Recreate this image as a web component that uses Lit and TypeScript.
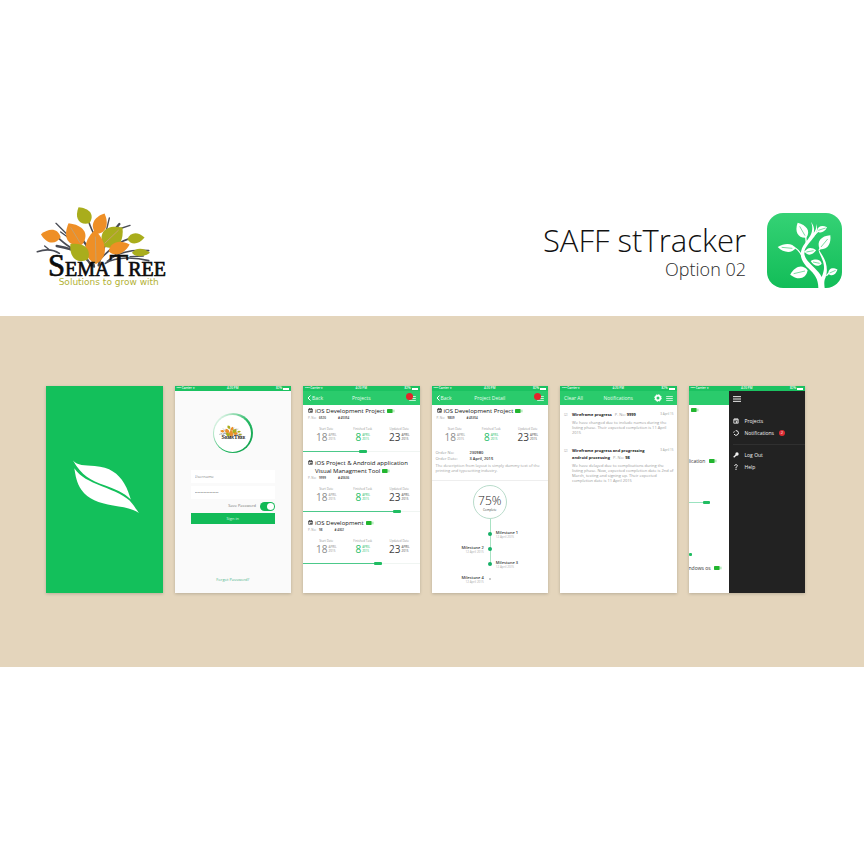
import { LitElement, html, svg, css, nothing } from "lit";
import { customElement } from "lit/decorators.js";

interface Project {
  title: string;
  poNumber: string;
  code: string;
  progress: number;
}

interface Notice {
  title: string;
  poNumber: string;
  date: string;
  body: string;
}

const PROJECTS: Project[] = [
  { title: "iOS Development Project", poNumber: "6520", code: "# 45354", progress: 52 },
  { title: "iOS Project & Android application Visual Managment Tool", poNumber: "9999", code: "# 45636", progress: 81 },
  { title: "iOS Development", poNumber: "98", code: "# 4302", progress: 65 },
];

const STATS = [
  { label: "Start Date", day: "18", month: "APRIL", year: "2015", tone: "muted" },
  { label: "Finished Task", day: "8", month: "APRIL", year: "2015", tone: "green" },
  { label: "Updated Date", day: "23", month: "APRIL", year: "2015", tone: "dark" },
];

const NOTICES: Notice[] = [
  {
    title: "Wireframe progress",
    poNumber: "9999",
    date: "3 April 15",
    body: "We have changed due to include names during the listing phase. Their expected completion is 11 April 2015",
  },
  {
    title: "Wireframe progress and progressing android processing",
    poNumber: "98",
    date: "3 April 15",
    body: "We have delayed due to complications during the listing phase. Now, expected completion date is 2nd of March, testing and signing up. Their expected completion date is 11 April 2015",
  },
];

const leaf = (x: number, y: number, length: number, width: number, angle: number, fill: string) => svg`
  <path transform="translate(${x} ${y}) rotate(${angle})" fill=${fill}
    d="M0 0C${length * 0.2} ${-width * 0.7} ${length * 0.65} ${-width * 0.7} ${length} 0C${length * 0.65} ${width * 0.6} ${length * 0.2} ${width * 0.7} 0 0Z"></path>`;

const OLIVE = "#a9ad1c";
const ORANGE = "#ee8f26";

const treeLogo = (tagline: boolean) => html`
  <svg class="tree-logo" viewBox="0 0 450 285" role="img" aria-label="SemaTree">
    <g fill="none" stroke="#4a4c55" stroke-linecap="round">
      <path stroke-width="7" d="M184 196C166 165 128 145 80 138M206 196C214 150 232 112 268 72M192 200C186 160 170 130 146 108"></path>
      <path stroke-width="5" d="M88 160C70 148 48 146 22 155M232 184C255 162 300 146 356 152M226 190C260 168 320 172 356 182M126 146C110 134 92 124 84 112M206 130C190 100 180 80 176 64M208 180C240 146 270 124 298 116"></path>
      <path stroke-width="4" d="M108 100L78 70M122 118L92 96M56 148L44 138M255 165L280 148M228 96L238 54M258 90L300 76M300 170L340 168"></path>
    </g>
    ${leaf(178, 70, 58, 42, -124, OLIVE)}
    ${leaf(92, 112, 60, 38, -171, ORANGE)}
    ${leaf(156, 134, 76, 56, -122, ORANGE)}
    ${leaf(199, 102, 66, 40, -68, ORANGE)}
    ${leaf(220, 138, 80, 60, -44, OLIVE)}
    ${leaf(198, 192, 102, 58, -92, ORANGE)}
    ${leaf(174, 178, 70, 48, -139, OLIVE)}
    ${leaf(236, 154, 66, 36, -18, ORANGE)}
    ${leaf(292, 118, 52, 30, -6, OLIVE)}
    ${leaf(306, 158, 54, 22, 0, OLIVE)}
    <path d="M198 186L196 110M150 128L122 82M224 130L266 90" fill="none" stroke="#c9a06a" stroke-width="3"></path>
    <g class="wordmark" fill="#0c0c0c">
      <text x="54" y="228"><tspan class="cap">S</tspan>EMA<tspan class="cap">T</tspan>REE</text>
    </g>
    ${tagline ? svg`<text class="tagline" x="86" y="254" fill="#b3b235">Solutions to grow with</text>` : nothing}
  </svg>`;

const appIcon = html`
  <svg class="app-icon" viewBox="0 0 225 225" role="img" aria-label="stTracker">
    <defs>
      <linearGradient id="tile" x1="0" y1="0" x2="0" y2="1">
        <stop offset="0" stop-color="#35d275"></stop>
        <stop offset="1" stop-color="#12bd58"></stop>
      </linearGradient>
    </defs>
    <rect width="225" height="225" rx="48" fill="url(#tile)"></rect>
    <path fill="#fff" d="M154 225C154 198 143 184 124 166C104 146 96 128 105 106C113 88 132 72 135 54C137 42 135 34 132 26C141 38 143 50 140 60C148 50 149 40 147 32C155 48 148 64 138 76C126 92 113 104 112 118C111 136 126 148 142 164C152 174 160 182 164 192C172 174 174 160 166 140C162 130 156 120 154 108C165 124 172 136 176 148C182 168 180 184 173 200C171 208 172 216 173 225Z"></path>
    <path fill="none" stroke="#fff" stroke-width="4" d="M108 134C100 118 94 108 80 102M142 66L156 52M118 90L116 70M157 112L160 104M112 118L120 112M178 188L186 180"></path>
    <g>
      ${leaf(118, 74, 52, 32, -120, "#fff")}
      ${leaf(150, 54, 32, 18, -20, "#fff")}
      ${leaf(86, 106, 54, 24, -176, "#fff")}
      ${leaf(158, 108, 52, 30, -52, "#fff")}
      ${leaf(114, 118, 34, 20, -10, "#fff")}
      ${leaf(164, 152, 34, 18, -166, "#fff")}
      ${leaf(122, 172, 54, 34, 166, "#fff")}
      ${leaf(184, 182, 30, 20, -24, "#fff")}
    </g>
    <g fill="none" stroke="#35c871" stroke-width="2">
      <path d="M114 68L98 40M154 52L176 45M76 106L44 103M162 102L182 78M118 117L140 113M158 151L138 147M114 174L80 182M188 180L206 172"></path>
    </g>
  </svg>`;

const battery = html`<svg class="battery" viewBox="0 0 24 12" aria-hidden="true">
  <rect width="17" height="12" rx="2" fill="#22b52f"></rect>
  <rect x="18" y="2" width="5" height="8" fill="#b8ecc0"></rect>
</svg>`;

const calendar = html`<svg class="glyph" viewBox="0 0 15 15" aria-hidden="true">
  <path fill="none" stroke="currentColor" stroke-width="2" d="M2 3H13V13H2ZM2 5H13M5 0V4M10 0V4"></path>
  <path fill="currentColor" d="M7 8H11V12H7Z"></path>
</svg>`;

const menuGlyph = html`<svg class="glyph" viewBox="0 0 24 18" aria-hidden="true">
  <path stroke="currentColor" stroke-width="3" d="M0 2H24M0 9H24M0 16H24"></path>
</svg>`;

@customElement("app-root")
export class AppRoot extends LitElement {
  static styles = css`
    :host {
      display: block;
      min-height: 100vh;
      background: #fff;
      color: #333;
      font: 4px/6px "Open Sans", "Noto Sans", sans-serif;
    }
    * { box-sizing: border-box; }
    h1, h2, h3, p, ul { margin: 0; padding: 0; font-weight: inherit; font-size: inherit; }
    ul { list-style: none; }
    svg { display: block; flex: none; overflow: visible; }
    button { border: 0; padding: 0; margin: 0; background: none; color: inherit; font: inherit; }
    a { color: inherit; text-decoration: none; }

    .header {
      display: flex;
      align-items: center;
      justify-content: space-between;
      padding: 200px 22px 21px 30px;
    }
    .brand .tree-logo { width: 150px; height: 95px; }
    .wordmark { font: 60px "Liberation Serif", serif; stroke: #0c0c0c; stroke-width: 2px; }
    .cap { font-size: 92px; }
    .tagline { font: 27px "DejaVu Sans", sans-serif; }
    .product { display: flex; align-items: center; gap: 21px; padding-top: 6px; }
    .app-icon { width: 75px; height: 75px; }
    .product-text { padding-top: 3px; text-align: right; color: #2b2b2b; }
    .product-text h1 { font-size: 31px; line-height: 34px; font-weight: 300; color: #111; }
    .product-text p { font-size: 18px; line-height: 24px; font-weight: 300; }

    .stage {
      display: grid;
      grid-template-columns: repeat(6, 1fr);
      gap: 12px;
      padding: 70px 59px 74px 46px;
      background: #e4d5bc;
    }
    .phone {
      display: flex;
      flex-direction: column;
      min-width: 0;
      min-height: 207px;
      overflow: hidden;
      background: #fff;
      box-shadow: 0 1px 3px #00000030;
    }
    .splash { align-items: center; justify-content: center; background: #13c05b; }
    .splash svg { width: 66px; height: 54px; margin: 0 0 6px 4px; }

    .status {
      display: grid;
      grid-template-columns: 1fr auto 1fr;
      align-items: center;
      height: 5px;
      padding: 0 2px;
      background: #1bc261;
      color: #fff;
      font-size: 3px;
      line-height: 5px;
      font-weight: 600;
    }
    .status .right { display: flex; justify-content: flex-end; align-items: center; gap: 1px; }
    .cell { width: 6px; height: 2px; background: #fff; }
    .nav {
      display: grid;
      grid-template-columns: 1fr auto 1fr;
      align-items: center;
      height: 14px;
      padding: 0 4px;
      background: #2acb6c;
      color: #e6fbee;
      font-size: 5px;
      line-height: 8px;
    }
    .nav .back { display: flex; align-items: center; gap: 1px; }
    .nav .back svg { width: 4px; height: 6px; }
    .nav .tools { display: flex; justify-content: flex-end; align-items: center; gap: 4px; }
    .nav .glyph { width: 7px; height: 5px; }
    .nav .gear { width: 8px; height: 8px; }
    .alert { position: relative; }
    .alert::before {
      content: "";
      position: absolute;
      right: 3px;
      bottom: 1px;
      width: 7px;
      height: 7px;
      border-radius: 50%;
      background: #e3242b;
    }

    .login { background: #fafafa; }
    .login form { display: flex; flex-direction: column; flex: 1; padding: 22px 16px 9px; }
    .medallion {
      display: grid;
      place-items: center;
      align-self: center;
      width: 40px;
      height: 40px;
      border-radius: 50%;
      background: linear-gradient(310deg, #0b9c48, #27b965 45%, #d9f2e3 85%);
    }
    .medallion span {
      display: grid;
      place-items: center;
      width: 37px;
      height: 37px;
      border-radius: 50%;
      background: #fff;
    }
    .medallion .tree-logo { width: 30px; height: 19px; }
    .field {
      width: 100%;
      min-width: 0;
      height: 13px;
      margin-top: 3px;
      padding: 0 4px;
      border: 0;
      outline: 0;
      background: #fff;
      color: #888;
      font: 4px/6px "Open Sans", sans-serif;
    }
    .field::placeholder { color: #888; }
    .user { margin-top: 17px; }
    .remember {
      display: flex;
      align-items: center;
      justify-content: flex-end;
      gap: 4px;
      height: 14px;
      color: #777;
      font-size: 4px;
    }
    .remember input {
      appearance: none;
      display: flex;
      justify-content: flex-end;
      width: 15px;
      height: 9px;
      margin: 0;
      padding: 1px;
      border-radius: 5px;
      background: #12b956;
    }
    .remember input::before { content: ""; width: 7px; height: 7px; border-radius: 50%; background: #fff; }
    .sign-in { height: 11px; background: #12bb58; color: #d8f7e4; font-size: 4px; }
    .forgot { margin-top: auto; align-self: center; color: #4fb58a; font-size: 4px; line-height: 8px; }

    .project { padding-bottom: 4px; }
    .project-head { display: flex; gap: 2px; padding: 2px 5px 0; }
    .project-head .glyph { width: 5px; height: 5px; margin-top: 1px; color: #222; }
    .project-head h3 { font-size: 6px; line-height: 8px; color: #111; }
    .battery { display: inline-block; width: 8px; height: 4px; margin-left: 2px; }
    .meta { display: flex; gap: 10px; padding: 0 5px; font-size: 3px; line-height: 6px; color: #999; }
    .meta b { color: #333; font-weight: 600; margin-left: 2px; }
    .stats { display: grid; grid-template-columns: repeat(3, 1fr); padding: 5px 2px 0 5px; text-align: center; }
    .stats .label { font-size: 3px; line-height: 6px; color: #999; }
    .figure { display: flex; justify-content: center; align-items: center; gap: 1px; }
    .figure strong { font-size: 10px; line-height: 10px; font-weight: 400; }
    .figure small { font-size: 3px; line-height: 4px; text-align: left; }
    .muted { color: #8b8b8b; }
    .green { color: #25bd67; }
    .dark { color: #444; }
    .track { display: flex; align-items: center; height: 3px; margin-top: 8px; }
    .track .done { height: 1px; background: #4cc98a; }
    .track .knob { width: 8px; height: 3px; border-radius: 1px; background: #20bd62; }
    .track .rest { flex: 1; height: 1px; background: #f0f5f2; }

    .facts { display: grid; grid-template-columns: 34px 1fr; padding: 8px 4px 0; line-height: 6px; color: #999; font-size: 4px; }
    .facts b { color: #333; font-weight: 600; }
    .summary { padding: 1px 4px 7px; font-size: 4px; line-height: 5px; color: #a2a2a2; border-bottom: 1px solid #eee; }
    .ring {
      display: flex;
      flex-direction: column;
      align-items: center;
      align-self: center;
      width: 34px;
      height: 34px;
      margin-top: 4px;
      padding-top: 8px;
      border: 1px solid #b9dccb;
      border-radius: 50%;
      color: #444;
      font-size: 3px;
      line-height: 4px;
    }
    .ring strong { font-size: 12px; line-height: 14px; font-weight: 300; color: #222; }
    .timeline { display: grid; grid-template-columns: 1fr 4px 1fr; column-gap: 4px; padding-top: 7px; position: relative; }
    .timeline::before {
      content: "";
      position: absolute;
      top: 0;
      bottom: 22px;
      left: 50%;
      width: 1px;
      background: #a8e2c3;
    }
    .timeline li { display: contents; }
    .stop { height: 15px; font-size: 4px; line-height: 5px; color: #333; padding-top: 4px; font-weight: 600; }
    .stop small { display: block; font-size: 3px; line-height: 4px; color: #aaa; font-weight: 400; }
    .before { grid-column: 1; text-align: right; }
    .after { grid-column: 3; }
    .dot { grid-column: 2; align-self: center; position: relative; height: 4px; border-radius: 50%; background: #16b067; }
    .pending .dot { height: 2px; width: 2px; justify-self: center; background: #bbb; }

    .notice { display: grid; grid-template-columns: 8px 1fr; padding: 6px 3px 0 4px; }
    .notice + .notice { margin-top: 6px; }
    .tick { color: #aaa; font-size: 4px; line-height: 7px; }
    .notice-head { display: flex; justify-content: space-between; gap: 4px; font-size: 3px; line-height: 7px; color: #999; }
    .notice-head h3 { font-size: 4px; line-height: 7px; color: #999; }
    .notice-head b { color: #222; font-weight: 700; }
    .notice-head time { flex: none; }
    .notice p { padding-top: 2px; font-size: 4px; line-height: 5px; color: #999; }

    .split { display: grid; grid-template-columns: 40px 1fr; flex: 1; }
    .peek { min-width: 0; overflow: hidden; white-space: nowrap; font-size: 5px; line-height: 8px; }
    .peek .bar { height: 14px; background: #2acb6c; }
    .peek .first { padding-top: 1px; }
    .peek .second { padding-top: 43px; }
    .peek .line { display: flex; align-items: center; margin-top: 36px; }
    .peek .line::before { content: ""; width: 14px; height: 1px; background: #9be3c0; }
    .peek .line::after, .peek .end { content: ""; width: 7px; height: 3px; background: #20bd62; border-radius: 1px; }
    .peek .end { width: 3px; margin-top: 49px; }
    .peek .third { padding-top: 8px; }
    .drawer { background: #222; color: #f2f2f2; font-size: 5px; line-height: 12px; padding: 5px 0 0 4px; }
    .drawer button { display: block; }
    .drawer button .glyph { width: 8px; height: 6px; }
    .drawer .glyph { width: 6px; height: 6px; }
    .drawer ul { padding: 13px 0 5px; border-bottom: 1px solid #303030; }
    .drawer ul + ul { padding-top: 4px; border: 0; }
    .drawer a { display: flex; align-items: center; gap: 6px; height: 12px; }
    .count {
      width: 6px;
      height: 6px;
      margin-left: -1px;
      border-radius: 50%;
      background: #dc2b32;
      font-size: 4px;
      line-height: 6px;
      text-align: center;
    }
  `;

  private status() {
    return html`<div class="status">
      <span>•••• Carrier ▾</span><span>4:20 PM</span>
      <span class="right">82% <i class="cell"></i></span>
    </div>`;
  }

  private nav(left: string, title: string, gear = false) {
    return html`<div class="nav">
      <button class="back">
        ${gear ? nothing : html`<svg viewBox="0 0 8 12" aria-hidden="true"><path d="M7 1L2 6L7 11" fill="none" stroke="#fff" stroke-width="2"></path></svg>`}
        ${left}
      </button>
      <h2>${title}</h2>
      <div class="tools">
        ${gear
          ? html`<button aria-label="Settings"><svg class="gear" viewBox="0 0 24 24"><circle cx="12" cy="12" r="7" fill="none" stroke="#fff" stroke-width="5"></circle><circle cx="12" cy="12" r="10" fill="none" stroke="#fff" stroke-width="3" stroke-dasharray="4 3.85"></circle></svg></button>`
          : nothing}
        <button class=${gear ? "menu" : "menu alert"} aria-label="Menu">${menuGlyph}</button>
      </div>
    </div>`;
  }

  private projectHead(p: Project) {
    return html`<div class="project-head">${calendar}<h3>${p.title}${battery}</h3></div>
      <div class="meta"><span>P. No: <b>${p.poNumber}</b></span><b>${p.code}</b></div>`;
  }

  private stats() {
    return html`<div class="stats">
      ${STATS.map((s) => html`<div>
        <div class="label">${s.label}</div>
        <div class="figure ${s.tone}"><strong>${s.day}</strong><small>${s.month}<br />${s.year}</small></div>
      </div>`)}
    </div>`;
  }

  private milestone(n: number, side: "before" | "after", pending = false) {
    const label = html`<span class="stop ${side}">Milestone ${n}<small>12 April 2015</small></span>`;
    const dot = html`<i class="dot"></i>`;
    return html`<li class=${pending ? "pending" : "reached"}>
      ${side === "before" ? html`${label}${dot}` : html`${dot}${label}`}
    </li>`;
  }

  render() {
    return html`
      <header class="header">
        <div class="brand">${treeLogo(true)}</div>
        <div class="product">
          <div class="product-text"><h1>SAFF stTracker</h1><p>Option 02</p></div>
          ${appIcon}
        </div>
      </header>
      <main class="stage">
        <section class="phone splash">
          <svg viewBox="0 0 201 162" role="img" aria-label="Leaf">
            <path fill="#fff" d="M0 0C14 16 34 14 66 17C112 20 138 40 156 70C167 88 171 104 176 119C154 98 130 88 96 76C54 60 26 46 0 0Z"></path>
            <path fill="#fff" d="M4 24C24 52 48 62 88 79C126 94 162 108 180 131C190 144 196 154 201 160C176 145 154 142 122 137C78 130 46 118 26 90C10 68 8 46 4 24Z"></path>
          </svg>
        </section>

        <section class="phone login">
          ${this.status()}
          <form>
            <div class="medallion"><span>${treeLogo(false)}</span></div>
            <input class="field user" type="text" placeholder="Username" aria-label="Username" />
            <input class="field" type="password" placeholder="••••••••••••••••" aria-label="Password" />
            <label class="remember">Save Password<input type="checkbox" checked /></label>
            <button class="sign-in" type="button">Sign in</button>
            <a class="forgot" href="#forgot">Forgot Password?</a>
          </form>
        </section>

        <section class="phone">
          ${this.status()} ${this.nav("Back", "Projects")}
          ${PROJECTS.map((p) => html`<article class="project">
            ${this.projectHead(p)} ${this.stats()}
            <div class="track">
              <i class="done" style="width:${p.progress - 4}%"></i><i class="knob"></i><i class="rest"></i>
            </div>
          </article>`)}
        </section>

        <section class="phone">
          ${this.status()} ${this.nav("Back", "Project Detail")}
          ${this.projectHead({ ...PROJECTS[0], poNumber: "9809" })} ${this.stats()}
          <div class="facts">
            <span>Order No:</span><b>230980</b>
            <span>Order Date:</span><b>3 April, 2015</b>
          </div>
          <p class="summary">The description from layout is simply dummy text of the printing and typesetting industry.</p>
          <div class="ring"><strong>75%</strong>Complete</div>
          <ul class="timeline">
            ${this.milestone(1, "after")} ${this.milestone(2, "before")}
            ${this.milestone(3, "after")} ${this.milestone(4, "before", true)}
          </ul>
        </section>

        <section class="phone">
          ${this.status()} ${this.nav("Clear All", "Notifications", true)}
          ${NOTICES.map((n) => html`<article class="notice">
            <span class="tick">☑</span>
            <div>
              <div class="notice-head">
                <h3><b>${n.title}</b> &nbsp; P. No: <b>${n.poNumber}</b></h3>
                <time>${n.date}</time>
              </div>
              <p>${n.body}</p>
            </div>
          </article>`)}
        </section>

        <section class="phone">
          ${this.status()}
          <div class="split">
            <div class="peek">
              <div class="bar"></div>
              <div class="first">${battery}</div>
              <div class="second">lication ${battery}</div>
              <div class="line"></div>
              <div class="end"></div>
              <div class="third">ndows os ${battery}</div>
            </div>
            <nav class="drawer">
              <button aria-label="Close menu">${menuGlyph}</button>
              <ul>
                <li><a href="#projects">${calendar}Projects</a></li>
                <li><a href="#notifications">
                  <svg class="glyph" viewBox="0 0 18 18" aria-hidden="true"><path d="M8 2A7 7 0 1 1 3 12M2 8L4 4" fill="none" stroke="currentColor" stroke-width="3"></path></svg>
                  Notifications<span class="count">2</span></a></li>
              </ul>
              <ul>
                <li><a href="#logout">
                  <svg class="glyph" viewBox="0 0 18 18" aria-hidden="true"><path d="M2 16L10 8" stroke="currentColor" stroke-width="4"></path><circle cx="12" cy="6" r="5" fill="currentColor"></circle></svg>
                  Log Out</a></li>
                <li><a href="#help">
                  <svg class="glyph" viewBox="0 0 18 18" aria-hidden="true"><path d="M5 6C5 0 14 1 13 6C12 9 9 8 9 12M9 14V18" fill="none" stroke="currentColor" stroke-width="3"></path></svg>
                  Help</a></li>
              </ul>
            </nav>
          </div>
        </section>
      </main>
    `;
  }
}
